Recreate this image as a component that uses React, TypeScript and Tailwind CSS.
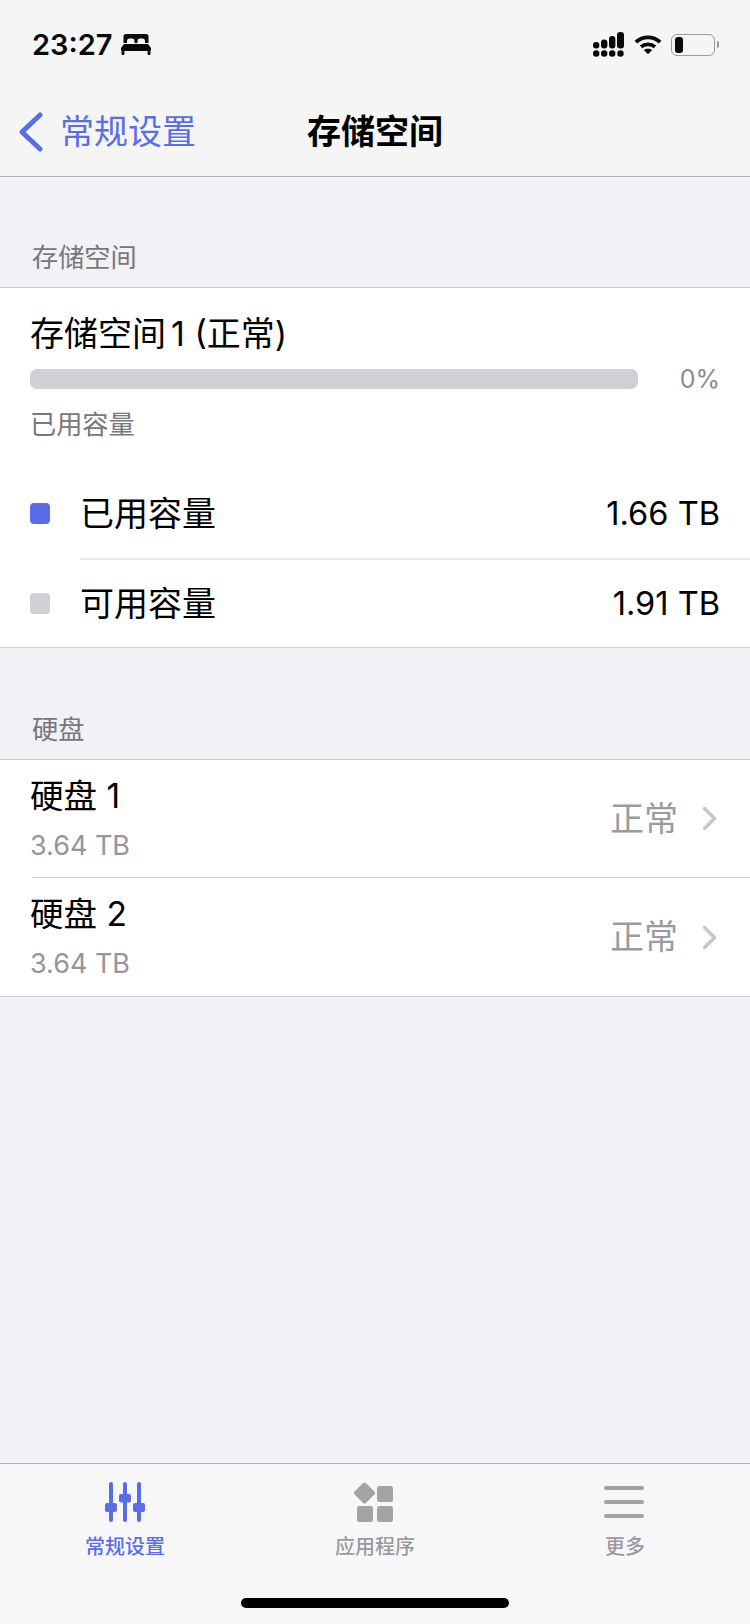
const CJK = "font-['Inter','Noto_Sans_CJK_SC',sans-serif]";

function BedIcon() {
  return (
    <svg width="30" height="21" viewBox="0 0 30 21" fill="#0a0a0a">
      <path d="M5 0h20a2.500 2.500 0 0 1 2.500 2.500V9H24V7a2.500 2.500 0 0 0-2.500-2.500H19A2.500 2.500 0 0 0 16.500 7v2h-3V7A2.500 2.500 0 0 0 11 4.500H8.500A2.500 2.500 0 0 0 6 7v2H2.500V2.500A2.500 2.500 0 0 1 5 0Z" />
      <path d="M3 10h24l3 4v3H0v-3Z" />
      <rect x="0.500" y="17" width="3" height="4" rx="1" />
      <rect x="26.500" y="17" width="3" height="4" rx="1" />
    </svg>
  );
}

function SignalIcon() {
  // four columns of dots, each column a bit taller than the last
  return (
    <svg width="31" height="25" viewBox="0 0 31 25" fill="#0a0a0a">
      <circle cx="3.200" cy="21.500" r="3.200" />
      <circle cx="11.200" cy="21.500" r="3.200" />
      <circle cx="19.200" cy="21.500" r="3.200" />
      <circle cx="27.500" cy="21.500" r="3.200" />
      <rect x="0" y="10" width="6.400" height="6.500" rx="3" />
      <rect x="8" y="7.500" width="6.400" height="9" rx="3" />
      <rect x="16" y="4" width="6.400" height="12.500" rx="3" />
      <rect x="24" y="0" width="7" height="16.500" rx="3" />
    </svg>
  );
}

function WifiIcon() {
  return (
    <svg width="28" height="21" viewBox="0 0 30 22" fill="none" stroke="#0a0a0a" strokeWidth="4">
      <path d="M2 8.500C9.500 1.500 20.500 1.500 28 8.500" />
      <path d="M7.500 13.500C11.500 10 18.500 10 22.500 13.500" />
      <path d="M15 21.500l-4.500-4.700c2.500-1.800 6.500-1.800 9 0Z" fill="#0a0a0a" stroke="none" />
    </svg>
  );
}

function BatteryIcon() {
  return (
    <div className="flex items-center">
      <div className="flex h-[22px] w-[44px] items-center rounded-[6px] border-[1.5px] border-[#9a9a9a] pl-[3px]">
        <div className="h-[16px] w-[8px] rounded-[3px] bg-[#0a0a0a]" />
      </div>
      <div className="ml-[2px] h-[7px] w-[2px] rounded-r-full bg-[#9a9a9a]" />
    </div>
  );
}

function SlidersIcon() {
  return (
    <svg width="40" height="40" viewBox="0 0 40 40" fill="#5a6de8">
      <rect x="4" y="0" width="4" height="40" rx="2" />
      <rect x="18" y="0" width="4" height="40" rx="2" />
      <rect x="32" y="0" width="4" height="40" rx="2" />
      <rect x="0" y="21" width="12" height="9" rx="2" />
      <rect x="14" y="12" width="12" height="8.500" rx="2" />
      <rect x="28" y="21" width="12" height="9" rx="2" />
    </svg>
  );
}

function AppsIcon() {
  return (
    <svg width="42" height="40" viewBox="0 0 42 40" fill="#a3a3a3">
      <rect x="2.500" y="3" width="16" height="16" rx="2" transform="rotate(45 10.500 11)" />
      <rect x="23" y="4" width="16" height="16" rx="2.500" />
      <rect x="3" y="24" width="16" height="16" rx="2.500" />
      <rect x="23" y="24" width="16" height="16" rx="2.500" />
    </svg>
  );
}

function MenuIcon() {
  return (
    <div className="mr-[2px] flex h-[40px] w-[40px] flex-col justify-center gap-[10px]">
      <div className="h-[4px] rounded-full bg-[#a3a3a3]" />
      <div className="h-[4px] rounded-full bg-[#a3a3a3]" />
      <div className="h-[4px] rounded-full bg-[#a3a3a3]" />
    </div>
  );
}

function DiskRow({ name, size, height }: { name: string; size: string; height: string }) {
  return (
    <div className={`flex items-center justify-between pr-[33px] ${height}`}>
      <div className="flex flex-col">
        <div className="h-[48px] text-[33.500px] leading-[48px] text-black">{name}</div>
        <div className="mt-[6px] h-[40px] text-[27px] leading-[40px] text-[#95959a]">{size}</div>
      </div>
      <div className="flex items-center gap-[24px]">
        <span className="text-[34px] leading-[44px] text-[#9b9b9f]">正常</span>
        <svg width="15" height="25" viewBox="0 0 15 25" fill="none" stroke="#c6c6c9" strokeWidth="3.500" strokeLinecap="round" strokeLinejoin="round">
          <path d="M2.500 2.500 12.500 12.500 2.500 22.500" />
        </svg>
      </div>
    </div>
  );
}

const TABS = [
  { label: '常规设置', icon: <SlidersIcon />, active: true },
  { label: '应用程序', icon: <AppsIcon />, active: false },
  { label: '更多', icon: <MenuIcon />, active: false },
];

export default function App() {
  return (
    <div className={`flex h-[1624px] w-[750px] flex-col overflow-hidden bg-[#f1f1f6] ${CJK}`}>
      <header className="h-[177px] border-b border-[#b2b2b5] bg-[#f5f5f6]">
        <div className="flex h-[88px] items-center justify-between pl-[32px] pr-[31px] pt-[1px]">
          <div className="flex items-center gap-[8px]">
            <span className="text-[29px] font-semibold leading-none text-[#0a0a0a]">23:27</span>
            <BedIcon />
          </div>
          <div className="flex items-center">
            <SignalIcon />
            <div className="ml-[10px] mr-[9px]">
              <WifiIcon />
            </div>
            <BatteryIcon />
          </div>
        </div>
        <div className="relative flex h-[88px] items-center justify-center">
          <button className="absolute left-[19px] top-[24px] flex items-center gap-[17px] text-[#5a6de8]">
            <svg width="24" height="40" viewBox="0 0 24 40" fill="none" stroke="#5a6de8" strokeWidth="5" strokeLinecap="round" strokeLinejoin="round">
              <path d="M21 3 3 20l18 17" />
            </svg>
            <span className="text-[34px] font-normal leading-[40px]">常规设置</span>
          </button>
          <h1 className="text-[34px] font-semibold leading-[40px] text-black">存储空间</h1>
        </div>
      </header>

      <div className="flex h-[110px] items-end pb-[10px] pl-[32px] text-[26.200px] leading-[38px] text-[#77777c]">存储空间</div>

      <section className="h-[361px] border-y border-[#cfcfd3] bg-white">
        <div className="px-[30px] pt-[26px]">
          <div className="text-[34px] leading-[40px] text-black">
            存储空间<span className="ml-[5px]">1 (正常)</span>
          </div>
          <div className="mt-[10px] flex items-center justify-between">
            <div className="h-[20px] w-[608px] rounded-[7px] bg-[#cfd0d3]" />
            <span className="text-[25px] leading-[30px] text-[#8b8b8f]">0%</span>
          </div>
          <div className="mt-[14px] text-[26.200px] leading-[34px] text-[#77777c]">已用容量</div>
        </div>
        <div className="mt-[26px] pl-[30px]">
          <div className="flex h-[90px] items-center pr-[30px]">
            <div className="h-[21px] w-[20px] rounded-[4px] bg-[#5a6de8]" />
            <span className="ml-[30px] flex-1 text-[34px] text-black">已用容量</span>
            <span className="text-[32.600px] text-black">1.66 TB</span>
          </div>
          <div className="ml-[50px] h-[1.500px] bg-[#e8e8ea]" />
          <div className="flex h-[87px] items-center pr-[30px]">
            <div className="h-[21px] w-[20px] rounded-[4px] bg-[#cfd0d3]" />
            <span className="ml-[30px] flex-1 text-[34px] text-black">可用容量</span>
            <span className="text-[32.600px] text-black">1.91 TB</span>
          </div>
        </div>
      </section>

      <div className="flex h-[111px] items-end pb-[10px] pl-[32px] text-[26.200px] leading-[38px] text-[#77777c]">硬盘</div>

      <section className="border-y border-[#cfcfd3] bg-white pl-[30px]">
        <DiskRow name="硬盘 1" size="3.64 TB" height="h-[117px]" />
        <div className="ml-[2px] h-px bg-[#cfcfd3]" />
        <DiskRow name="硬盘 2" size="3.64 TB" height="h-[118px]" />
      </section>

      <div className="flex-1" />

      <nav className="relative h-[161px] border-t border-[#b2b2b5] bg-[#f7f7f9]">
        <div className="grid grid-cols-3 pt-[16px]">
          {TABS.map((tab) => (
            <div key={tab.label} className="flex flex-col items-center">
              <div className="flex h-[44px] items-center">{tab.icon}</div>
              <span className={`mt-[8px] text-[20px] font-medium leading-[30px] ${tab.active ? 'text-[#5a6de8]' : 'text-[#9a9a9d]'}`}>
                {tab.label}
              </span>
            </div>
          ))}
        </div>
        <div className="absolute bottom-[16px] left-[241px] h-[10px] w-[268px] rounded-full bg-black" />
      </nav>
    </div>
  );
}
